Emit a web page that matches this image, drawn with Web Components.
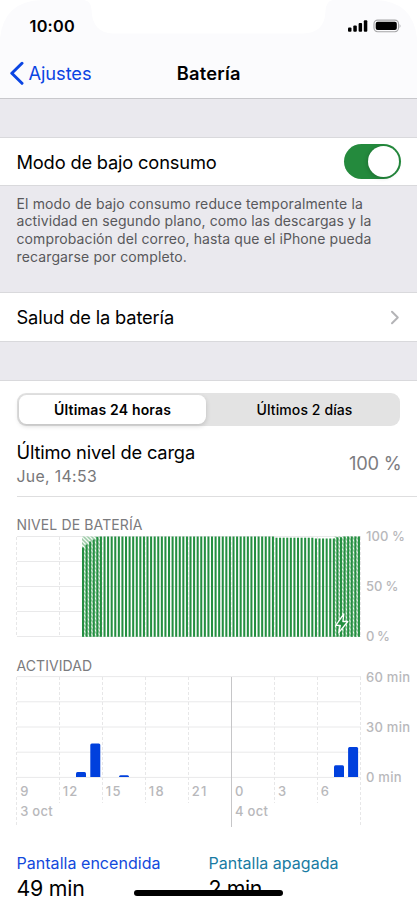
<!DOCTYPE html>
<html lang="es">
<head>
<meta charset="utf-8">
<title>Batería</title>
<style>
body{margin:0;width:417px;height:905px;overflow:hidden;background:#fff;font-family:Inter,"Liberation Sans",sans-serif;color:#000}
</style>
</head>
<body>
<battery-page></battery-page>
<script>
const define = (name, html, setup) => customElements.define(name, class extends HTMLElement {
  connectedCallback() {
    if (this.shadowRoot) return;
    const t = document.createElement('template');
    t.innerHTML = html;
    this.attachShadow({mode: 'open'}).append(t.content.cloneNode(true));
    if (setup) setup(this, this.shadowRoot);
  }
});

// Single-line text, tracked so its advance equals the "w" attribute.
define('fit-text', `<style>
:host{display:block;white-space:nowrap;width:max-content}
span{display:inline-block}
</style><span><slot></slot></span>`, (host, root) => {
  const s = root.querySelector('span'), n = host.textContent.length;
  const diff = Number(host.getAttribute('w')) - s.getBoundingClientRect().width;
  s.style.letterSpacing = (diff / n) + 'px';
});

define('status-bar', `<style>
:host{display:block;position:relative;height:48px;overflow:hidden}
.notch{position:absolute;inset:0;width:417px;height:48px}
.row{position:relative;display:flex;justify-content:space-between;align-items:center;height:52px;padding:0 16px 0 29.500px;box-sizing:border-box;font-weight:600;font-size:16.300px}
</style>
<svg class="notch" viewBox="0 0 417 48"><path fill="#fff" d="M84 0Q91 1 91.500 9Q92 33 113 33.500H303Q325 33 325.500 11Q326 1 333 0ZM0 0H42Q4 1 0 38ZM417 0H375Q413 1 417 38Z"/></svg>
<div class="row"><fit-text w="45.500">10:00</fit-text>
<svg width="54" height="14" viewBox="0 0 54 14"><g><rect x="1" y="8.600" width="3.500" height="4.200" rx="1"/><rect x="6.300" y="6.600" width="3.500" height="6.200" rx="1"/><rect x="11.600" y="4.100" width="3.500" height="8.700" rx="1"/><rect x="16.800" y="1.200" width="3.500" height="11.600" rx="1"/></g>
<rect x="27" y="1.100" width="24.500" height="11.600" rx="3.600" fill="none" stroke="#a5a5a7" stroke-width="1.100"/><rect x="28.700" y="2.800" width="21.100" height="8.200" rx="1.900"/><path d="M52.600 5.100q1.800 1.900 0 3.800z" fill="#a5a5a7"/></svg></div>`);

define('nav-bar', `<style>
:host{display:grid;grid-template-columns:1fr 63.500px 1fr;align-items:center;height:50px;font-size:18.3px}
.back{display:flex;align-items:center;gap:4.500px;padding-left:10px;color:#0b45e3}
.back svg{display:block}
.title{font-weight:600}
</style>
<div class="back"><svg width="14" height="24" viewBox="0 0 14 24"><path d="M12 2.300L1.800 12.300 12 22.300" fill="none" stroke="#0b45e3" stroke-width="3" stroke-linecap="round" stroke-linejoin="round"/></svg><fit-text w="63">Ajustes</fit-text></div>
<fit-text class="title" w="64">Batería</fit-text>`);

define('list-row', `<style>
:host{display:flex;justify-content:space-between;align-items:center;box-sizing:border-box;height:49px;padding:0 16.500px 0 16.500px;background:#fff;border:solid #d9d9dc;border-width:1px 0;font-size:18.3px}
</style><slot></slot>`);

define('toggle-switch', `<style>
:host{display:flex;justify-content:flex-end;align-items:center;width:57px;height:35px;border-radius:18px;background:#248a3d;padding-right:2px;box-sizing:border-box}
i{width:31px;height:31px;border-radius:50%;background:#fff;box-shadow:-1px 1px 4px rgba(0,0,0,.18)}
</style><i></i>`);

define('chevron-right', `<style>:host{display:block;margin-right:1px}svg{display:block}</style>
<svg width="10" height="15" viewBox="0 0 10 15"><path d="M2 1.800L7.800 7.500 2 13.200" fill="none" stroke="#b4b4b7" stroke-width="2" stroke-linecap="round" stroke-linejoin="round"/></svg>`);

define('group-note', `<style>
:host{display:block;height:106px;box-sizing:border-box;padding:8.600px 16.500px 0;font-size:14px;line-height:17.800px;color:#58585b}
</style><slot></slot>`);

define('segmented-control', `<style>
:host{display:grid;grid-template-columns:187px 1fr;box-sizing:border-box;height:33px;padding:2px;background:#e3e3e3;border-radius:9px;font-size:14px}
div{display:grid;place-items:center}
.on{background:#fff;border-radius:7.500px;font-weight:600;box-shadow:0 2px 5px rgba(0,0,0,.16)}
.off{font-weight:500;padding-left:5px}
</style><div class="on"><slot name="on"></slot></div><div class="off"><slot name="off"></slot></div>`);

define('charge-level', `<style>
:host{display:flex;justify-content:space-between;align-items:center;box-sizing:border-box;height:71px;margin-right:-17px;padding:0 15.500px 0 0;border-bottom:1px solid #dededf}
.l{display:flex;flex-direction:column;margin-left:-.5px;font-size:18.300px;line-height:26px;padding-top:5px}
.s{font-size:15.800px;line-height:24px;color:#77777a}
.v{font-size:18.300px;color:#7c7c7f;padding-top:3px}
</style><div class="l"><fit-text w="178.500">Último nivel de carga</fit-text><fit-text class="s" w="80.500">Jue, 14:53</fit-text></div><fit-text class="v" w="52.500">100 %</fit-text>`);

const XS = [16.5, 59.5, 102.5, 145.5, 188.5, 231.5, 274.5, 317.5, 360.5];
const label = (x, y, w, s) => `<text x="${x}" y="${y}" textLength="${w}" fill="#b8b8bb">${s}</text>`;
const grid = (y0, step) => [0, 1, 2, 3, 4].map(i => `<path d="M17 ${y0 + step * i}H361" stroke="#e9e9ea"/>`).join('');
const chartCss = `<style>:host{display:block;margin:0 -17px}svg{display:block;font-size:13px;font-weight:500}.h{font-size:14px;font-weight:400}</style>`;

// Battery chart: one bar per quarter hour, hatched while charging.
let bars = '';
for (let i = 0; i < 78; i++) {
  const x = 82 + i * 3.583;
  const drop = i < 5 ? [11, 8, 5, 3, 0.3][i] : i < 54 ? 0 : i < 65 ? 1.2 : i < 71 ? 2 : i < 73 ? 0.8 : 0;
  bars += `<rect x="${x.toFixed(2)}" y="${21.5 + drop}" width="2.05" height="${100.3 - drop}"/>`;
}
define('battery-chart', `${chartCss}
<svg width="417" height="141" viewBox="0 0 417 141">
<defs><pattern id="h" width="4" height="4" patternUnits="userSpaceOnUse"><rect width="4" height="4" fill="#9ccba7"/><path d="M-1 -1L5 5M-1 3L1 5M3 -1L5 1" stroke="#f4faf5" stroke-width="1.300"/></pattern></defs>
<text class="h" x="16.500" y="15" textLength="126" fill="#7b7b7e">NIVEL DE BATERÍA</text>
${grid(21.5, 25)}
${XS.map(x => `<path d="M${x} 22V122" stroke="#e7e7e8" stroke-dasharray="3 2"/>`).join('')}
<rect x="82" y="21.500" width="18.500" height="100.300" fill="url(#h)"/><rect x="334" y="21.500" width="26" height="100.300" fill="url(#h)"/>
<g fill="#248f41">${bars}</g>
<path d="M343.800 98.800L335.800 110.300H340.300L338.800 117.700L347.800 106.500H342.900Z" fill="#248f41" stroke="#fff" stroke-width="1.300" stroke-linejoin="round"/>
${label(366, 26, 39, '100 %')}${label(366, 76, 32.500, '50 %')}${label(366, 126, 24, '0 %')}
</svg>`);

// Activity chart: one bar per hour.
const act = [[76, 5], [90.3, 33.5], [119, 1.8], [334, 11.8], [348.1, 30.2]];
define('activity-chart', `${chartCss}
<svg width="417" height="174" viewBox="0 0 417 174">
<text class="h" x="16.500" y="14.500" textLength="75.500" fill="#7b7b7e">ACTIVIDAD</text>
${grid(20.6, 25.2)}
${XS.map((x, i) => i === 5 ? `<path d="M${x} 21V171" stroke="#c6c6c8"/>` : `<path d="M${x} 21V${i % 8 ? 147 : 171}" stroke="#e7e7e8" stroke-dasharray="3 2"/>`).join('')}
${act.map(([x, h]) => `<path fill="#0040dd" d="M${x} ${121.1}v${-(h - Math.min(1.5, h))}q0 -1.500 1.500 -1.500h7q1.500 0 1.500 1.500v${h - Math.min(1.5, h)}z"/>`).join('')}
${label(20.3, 139.800, 8, '9')}${label(62.800, 139.800, 14.500, '12')}${label(105.800, 139.800, 14.800, '15')}${label(148.800, 139.800, 14.800, '18')}${label(191.800, 139.800, 14.500, '21')}${label(235, 139.800, 8, '0')}${label(278, 139.800, 8, '3')}${label(320.700, 139.800, 8, '6')}
${label(20.300, 160, 32.300, '3 oct')}${label(235, 160, 33, '4 oct')}
${label(366, 25.800, 44, '60 min')}${label(366, 76, 44, '30 min')}${label(366, 126.200, 35.500, '0 min')}
</svg>`);

define('screen-time', `<style>
:host{display:grid;grid-template-columns:192px 1fr;margin-left:-.5px;padding-top:23px;font-size:16px;line-height:20px}
.on{color:#1249dc}.off{color:#187ba3}.n{font-size:21.300px;line-height:31px}
</style><fit-text class="on" w="144">Pantalla encendida</fit-text><fit-text class="off" w="130">Pantalla apagada</fit-text><fit-text class="n" w="68">49 min</fit-text><fit-text class="n" w="53.500">2 min</fit-text>`);

define('battery-page', `<style>
:host{display:block;position:relative;width:417px;height:905px;overflow:hidden;background:#eae9ee}
header{background:#fbfbfd;border-bottom:1px solid #c8c8cc;height:98px}
.gap{height:38px}
section{height:524px;padding:12px 17px 0;background:#fff;border-top:1px solid #d9d9dc}
.home{position:absolute;left:134px;top:890px;width:149px;height:6px;border-radius:3px;background:#000}
</style>
<header><status-bar></status-bar><nav-bar></nav-bar></header>
<div class="gap"></div>
<list-row><fit-text w="200">Modo de bajo consumo</fit-text><toggle-switch></toggle-switch></list-row>
<group-note><fit-text w="346.500">El modo de bajo consumo reduce temporalmente la</fit-text><fit-text w="355">actividad en segundo plano, como las descargas y la</fit-text><fit-text w="355">comprobación del correo, hasta que el iPhone pueda</fit-text><fit-text w="170.500">recargarse por completo.</fit-text></group-note>
<list-row style="height:50px"><fit-text w="157.500">Salud de la batería</fit-text><chevron-right></chevron-right></list-row>
<div class="gap"></div>
<section>
<segmented-control><fit-text slot="on" w="117">Últimas 24 horas</fit-text><fit-text slot="off" w="96">Últimos 2 días</fit-text></segmented-control>
<charge-level></charge-level>
<div style="height:18px"></div>
<battery-chart></battery-chart>
<activity-chart></activity-chart>
<screen-time></screen-time>
</section>
<div class="home"></div>`);
</script>
</body>
</html>
